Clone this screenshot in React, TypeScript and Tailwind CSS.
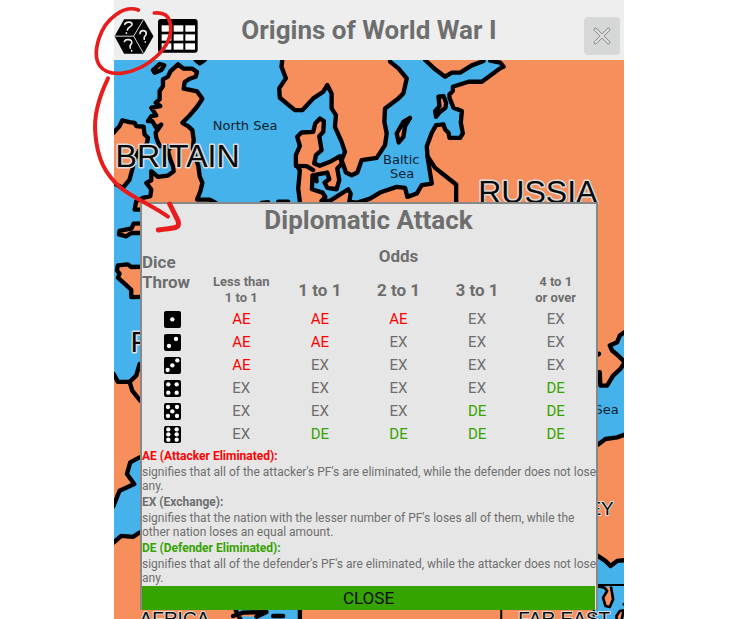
import React from "react";

type Outcome = "AE" | "EX" | "DE";

const rows: Outcome[][] = [
  ["AE", "AE", "AE", "EX", "EX"],
  ["AE", "AE", "EX", "EX", "EX"],
  ["AE", "EX", "EX", "EX", "EX"],
  ["EX", "EX", "EX", "EX", "DE"],
  ["EX", "EX", "EX", "DE", "DE"],
  ["EX", "DE", "DE", "DE", "DE"],
];

const outcomeColor: Record<Outcome, string> = {
  AE: "text-[#ff0000]",
  EX: "text-[#6e6e6e]",
  DE: "text-[#35a300]",
};

const pips: [number, number][][] = [
  [[25, 25]],
  [[36, 15], [15, 36]],
  [[40, 10], [25, 25], [11, 39]],
  [[13, 13], [38, 13], [13, 38], [38, 38]],
  [[12, 12], [39, 12], [25, 25], [12, 39], [39, 39]],
  [[13, 10], [38, 10], [13, 25], [38, 25], [13, 41], [38, 41]],
];

const legend = [
  {
    title: "AE (Attacker Eliminated):",
    color: "text-[#ff0000]",
    text: "signifies that all of the attacker's PF's are eliminated, while the defender does not lose any.",
  },
  {
    title: "EX (Exchange):",
    color: "text-[#6e6e6e]",
    text: "signifies that the nation with the lesser number of PF's loses all of them, while the other nation loses an equal amount.",
  },
  {
    title: "DE (Defender Eliminated):",
    color: "text-[#35a300]",
    text: "signifies that all of the defender's PF's are eliminated, while the attacker does not lose any.",
  },
];

function Die({ value }: { value: number }) {
  return (
    <svg viewBox="0 0 51 51" role="img" aria-label={`${value}`} className="mx-auto block size-[17px]">
      <rect width="51" height="51" rx="6" fill="#000" />
      {pips[value - 1].map(([x, y]) => (
        <circle key={`${x}-${y}`} cx={x} cy={y} r="6.5" fill="#fff" />
      ))}
    </svg>
  );
}

function CubeIcon() {
  return (
    <svg viewBox="90 54 120 106" className="h-[35px] w-10" aria-hidden="true">
      <path d="M91 106 L120 55 H179 L209 106 L179 159 H120 Z" fill="#000" />
      <path d="M91 106 H149 L179 55 M149 106 L179 159" fill="none" stroke="#ddd" strokeWidth="3" />
      <g fill="none" stroke="#eee" strokeWidth="5" strokeLinecap="round">
        <path d="M122 70 C125 61 146 61 144 71 C142 79 132 77 130 87 M127 96 v1" />
        <path d="M168 98 C170 84 188 88 187 99 C186 107 178 105 181 115 M184 123 v1" />
        <path d="M121 122 C124 113 147 115 143 127 C140 134 135 131 139 142 M143 150 v1" />
      </g>
    </svg>
  );
}

function GridIcon() {
  return (
    <svg viewBox="217 56 120 102" className="h-[34px] w-10" aria-hidden="true">
      <rect x="217" y="56" width="119" height="101" rx="9" fill="#000" />
      {[75, 102, 129].map((y) =>
        [228, 264, 299].map((x) => <rect key={`${x}-${y}`} x={x} y={y} width="29" height="19" fill="#fff" />),
      )}
    </svg>
  );
}

function EuropeMap() {
  return (
    <svg
      viewBox="114 60 510 558"
      preserveAspectRatio="xMidYMin slice"
      className="absolute inset-0 size-full"
      aria-hidden="true"
    >
      <rect x="100" y="50" width="540" height="600" fill="#45b2ec" />
      <g fill="#f78f5d" stroke="#000" strokeWidth="13" strokeLinejoin="round" strokeLinecap="round">
        {/* British Isles */}
        <g transform="translate(110 56) scale(.33333)">
          <path d="M205 25 L222 38 L248 38 L262 48 L258 62 L240 68 L225 78 L222 98 L245 102 L262 106 L278 128 L262 152 L240 178 L218 200 L235 210 L248 222 L252 250 L250 280 L266 330 L270 360 L278 380 L272 405 L262 430 L300 430 L318 440 L318 460 L75 460 L80 435 L100 425 L122 420 L125 400 L110 380 L125 372 L125 345 L145 362 L175 358 L192 345 L190 330 L182 310 L175 285 L185 270 L150 270 L140 245 L138 230 L155 205 L140 215 L128 195 L115 195 L125 180 L140 178 L125 155 L152 150 L138 140 L150 130 L150 105 L160 90 L160 70 L175 62 L183 45 Z" />
          <path d="M-10 235 L12 230 L30 210 L38 193 L60 198 L75 200 L80 210 L102 212 L105 235 L115 245 L112 262 L88 285 L75 310 L68 340 L60 370 L40 395 L20 385 L-10 365 Z" />
          <path d="M130 42 L150 24 L164 28 L155 42 L135 50 Z" />
          <path d="M258 12 L285 12 L270 22 Z" />
          <path d="M455 440 L475 438 M505 436 L535 436" />
        </g>
        {/* Scandinavia, Denmark and the eastern mainland */}
        <g transform="translate(270 55) scale(.33333)">
          <path d="M90 440 L85 400 L90 345 L78 328 L78 300 L90 272 L82 245 L95 232 L130 230 L136 205 L150 190 L162 198 L160 230 L148 243 L155 285 L138 300 L133 325 L150 332 L180 320 L210 303 L216 325 L202 340 L208 375 L200 402 L172 398 L164 382 L178 372 L172 352 L138 358 L140 378 L128 360 L126 402 L158 412 L166 425 L155 437 L180 437 L235 402 L242 415 L238 440 L262 442 L300 430 L330 412 L380 395 L405 398 L412 425 L440 415 L455 390 L485 385 L472 303 L470 273 L485 233 L498 210 L520 208 L525 223 L535 233 L538 248 L570 248 L578 235 L572 203 L575 168 L550 158 L538 128 L538 118 L548 108 L548 95 L595 80 L635 80 L690 40 L700 35 L690 23 L660 17 L660 -10 L1090 -10 L1090 1700 L90 1700 Z" />
          <path d="M40 -10 L35 35 L48 70 L28 100 L30 128 L75 165 L98 165 L130 130 L160 110 L172 90 L185 115 L185 160 L198 180 L195 215 L215 260 L225 290 L215 315 L228 352 L245 360 L262 352 L275 315 L320 308 L345 270 L350 235 L343 200 L345 160 L385 130 L400 115 L410 70 L385 40 L360 20 L360 -10 Z" />
          <path d="M465 -10 L465 15 L495 43 L525 65 L545 53 L570 53 L605 31 L640 18 L640 -10 Z" />
          <path d="M420 188 L400 200 L380 235 L386 262 L400 245 L405 213 Z" />
          <path d="M505 125 L520 123 L528 143 L526 158 L510 170 L498 185 L495 168 L508 153 Z" />
          <path d="M78 332 L110 333 L130 345" fill="none" />
          <path d="M472 303 L495 338 L520 358 L558 388 L558 450" fill="none" />
        </g>
        {/* Atlantic coast */}
        <g transform="translate(110 190) scale(.33333)">
          <path d="M150 98 L72 100 L66 114 L30 122 L28 132 L50 138 L65 128 L150 128 Z" />
          <path d="M150 228 L65 230 L55 222 L25 225 L22 240 L30 250 L25 262 L45 280 L65 298 L65 320 L150 318 Z" />
          <path d="M-20 545 L12 550 L25 574 L60 574 L80 555 L90 520 L150 520 L150 790 L90 800 L62 815 L52 850 L74 880 L30 900 L12 945 L-20 990 Z" />
          <path d="M60 574 L68 600 L92 630" fill="none" />
          <path d="M-20 1080 L12 1055 L35 1035 L70 1038 L90 1025 L300 1100 L380 1262 L400 1300 L-20 1300 Z" />
          <path d="M370 1275 L400 1265 L470 1263 L440 1277 M490 1275 L520 1275" />
        </g>
        {/* Black Sea, Turkey and the Far East inset */}
        <g transform="translate(590 190) scale(.33333)">
          <path d="M130 410 L102 425 L88 435 L80 455 L58 465 L65 480 L85 497 L103 515 L90 535 L68 555 L50 585 L30 585 L28 545 L0 545 L0 780 L22 762 L45 745 L80 740 L130 722 Z" fill="#45b2ec" />
          <path d="M0 1080 L22 1095 L45 1110 L60 1125 L80 1110 L130 1105 L130 1320 L0 1320 Z" fill="#45b2ec" />
          <path d="M-280 1182 H130" strokeWidth="6" />
          <path d="M18 1185 L42 1190 L50 1200 L38 1220 L45 1245 L58 1248 L68 1225 L62 1190" strokeWidth="8" />
          <path d="M-267 1182 H10 V1300 H-267 Z" strokeWidth="6" />
          <path d="M80 1300 L78 1275 L88 1260 L100 1258 L90 1300 M100 1240 L110 1235" strokeWidth="8" />
          <path d="M18 495 L26 490" />
        </g>
      </g>
      <g
        fontFamily='"Liberation Sans", Arial, sans-serif'
        fill="#0a0a0a"
        stroke="#dcdcdc"
        strokeWidth="3"
        strokeLinejoin="round"
        paintOrder="stroke"
      >
        <text x="116" y="167" fontSize="32">BRITAIN</text>
        <text x="478" y="203" fontSize="32">RUSSIA</text>
        <text x="131" y="351" fontSize="29">F</text>
        <g strokeWidth="2">
          <text x="588" y="514" fontSize="19">EY</text>
          <text x="140" y="624" fontSize="19">AFRICA</text>
          <text x="518" y="624" fontSize="19">FAR EAST</text>
        </g>
      </g>
      <g fontFamily='"DejaVu Sans", sans-serif' fontSize="13" fill="#10212c">
        <text x="213" y="130">North Sea</text>
        <text x="383" y="164">Baltic</text>
        <text x="390" y="178">Sea</text>
        <text x="594" y="413">Sea</text>
      </g>
    </svg>
  );
}

function Annotation() {
  return (
    <svg viewBox="0 0 210 240" className="pointer-events-none absolute top-0 -left-[29px] h-60 w-[210px]" aria-hidden="true">
      <g
        transform="scale(.33333)"
        fill="none"
        stroke="#e81c1c"
        strokeLinecap="round"
        strokeLinejoin="round"
      >
        <path d="M160 30 C120 15 62 52 42 115 C18 190 50 224 108 220 C190 210 262 140 257 80 C254 45 235 36 208 39" strokeWidth="11" />
        <path d="M69 235 C40 295 26 350 31 400 C37 480 62 522 105 562 C150 597 200 615 249 650" strokeWidth="12" />
        <path d="M254 612 L279 662 C287 690 262 682 220 690" strokeWidth="15" />
      </g>
    </svg>
  );
}

function AttackTable() {
  return (
    <table className="w-full table-fixed border-collapse text-center text-[#6e6e6e]">
      <colgroup>
        <col className="w-[60px]" />
        <col span={5} />
      </colgroup>
      <thead className="text-[17px] leading-5 font-bold">
        <tr className="h-8">
          <th scope="col" rowSpan={2} className="pt-3 text-left align-top">Dice Throw</th>
          <th scope="colgroup" colSpan={5}>Odds</th>
        </tr>
        <tr className="h-9">
          <th scope="col" className="text-[13px] leading-4">Less than<br />1 to 1</th>
          <th scope="col">1 to 1</th>
          <th scope="col">2 to 1</th>
          <th scope="col">3 to 1</th>
          <th scope="col" className="text-[13px] leading-4">4 to 1<br />or over</th>
        </tr>
      </thead>
      <tbody className="text-[15px] leading-[23px]">
        {rows.map((row, i) => (
          <tr key={i}>
            <th scope="row"><Die value={i + 1} /></th>
            {row.map((cell, j) => (
              <td key={j} className={outcomeColor[cell]}>{cell}</td>
            ))}
          </tr>
        ))}
      </tbody>
    </table>
  );
}

export default function App() {
  return (
    <div className="flex min-h-screen justify-center bg-white pl-1.5 font-[Roboto,sans-serif]">
      <div className="relative flex w-full max-w-[510px] flex-col">
        <header className="flex h-[60px] items-center justify-between bg-[#eeeeee] pr-1 pt-3">
          <div className="flex items-center gap-1">
            <button type="button" aria-label="Dice"><CubeIcon /></button>
            <button type="button" aria-label="Table"><GridIcon /></button>
          </div>
          <h1 className="mb-3 ml-1 text-[26px] leading-8 font-bold text-[#6e6e6e]">Origins of World War I</h1>
          <button type="button" aria-label="Close" className="ml-12 flex h-[38px] w-9 items-center justify-center rounded-sm bg-[#d6d8d7]">
            <svg viewBox="0 0 18 18" className="size-[18px]" aria-hidden="true">
              <g fill="none" strokeLinecap="round">
                <path d="M2.5 2.5 L15.5 15.5 M15.5 2.5 L2.5 15.5" stroke="#8c8c8c" strokeWidth="3.6" />
                <path d="M2.5 2.5 L15.5 15.5 M15.5 2.5 L2.5 15.5" stroke="#e2e4e3" strokeWidth="1.8" />
              </g>
            </svg>
          </button>
        </header>
        <main className="relative grow overflow-hidden pt-[142px] pr-[26px] pb-2 pl-[26px]">
          <EuropeMap />
          <section role="dialog" aria-labelledby="attack-title" className="relative border-2 border-b-0 border-[#888888] bg-[#e6e6e6] pr-px">
            <h2 id="attack-title" className="h-9 text-center text-[26px] leading-8 font-bold text-[#6e6e6e]">Diplomatic Attack</h2>
            <AttackTable />
            <div className="mt-px -mr-1 mb-px text-xs text-[#6e6e6e]">
              {legend.map((item) => (
                <React.Fragment key={item.title}>
                  <h3 className={`leading-[18px] font-bold ${item.color}`}>{item.title}</h3>
                  <p className="leading-[14px]">{item.text}</p>
                </React.Fragment>
              ))}
            </div>
            <button type="button" className="block h-6 w-full bg-[#35a300] text-[17px] leading-6 text-[#0c0c0c]">CLOSE</button>
          </section>
        </main>
        <Annotation />
      </div>
    </div>
  );
}
